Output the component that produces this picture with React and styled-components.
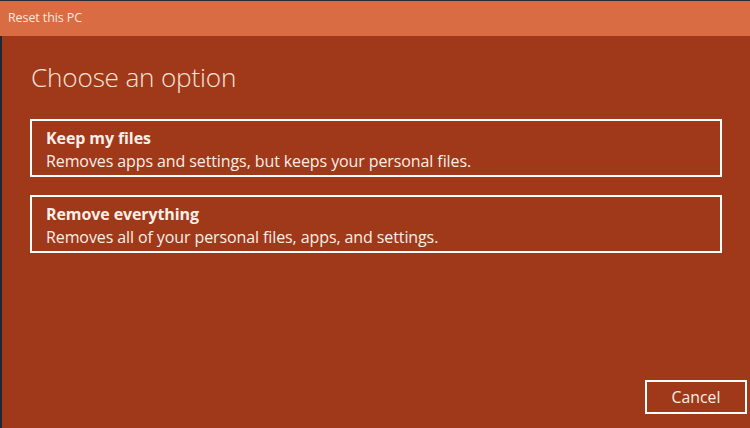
import React from "react";
import styled, { createGlobalStyle } from "styled-components";

const Global = createGlobalStyle`
  html, body { margin: 0; padding: 0; background: #A0391A; }
  body { font-family: "Open Sans", "Noto Sans", sans-serif; }
  #root { width: 750px; height: 428px; }
`;

const Window = styled.div`
  width: 750px;
  height: 428px;
  display: flex;
  flex-direction: column;
  background: #A0391A;
  border-top: 1px solid #23303a;
  box-sizing: border-box;
  overflow: hidden;
`;

const TitleBar = styled.div`
  height: 35px;
  flex: none;
  background: #DA6C43;
  display: flex;
  align-items: center;
  padding: 0 0 3px 8px;
  box-sizing: border-box;
  color: #fbe6dc;
  font-family: "Open Sans", sans-serif;
  font-size: 12.5px;
  letter-spacing: -0.1px;
`;

const Body = styled.div`
  flex: 1;
  display: flex;
  flex-direction: column;
  border-left: 2px solid #1e2a33;
  padding: 24px 28px 14px 28px;
  box-sizing: border-box;
`;

const Heading = styled.h1`
  margin: 0 0 25px 1px;
  font-family: "Open Sans", sans-serif;
  font-weight: 300;
  font-size: 26.2px;
  line-height: 34px;
  color: #f6e3da;
  letter-spacing: -0.2px;
`;

const Options = styled.div`
  display: flex;
  flex-direction: column;
  gap: 18px;
`;

const Option = styled.div`
  height: 58px;
  border: 2px solid #ffffff;
  box-sizing: border-box;
  padding: 6px 14px 0;
  display: flex;
  flex-direction: column;
  color: #fbeee8;
`;

const OptionTitle = styled.div`
  font-family: "Open Sans", sans-serif;
  font-weight: 700;
  font-size: 16px;
  line-height: 22px;
  letter-spacing: -0.1px;
`;

const OptionDesc = styled.div`
  font-family: "Open Sans", sans-serif;
  font-size: 16px;
  line-height: 24px;
  letter-spacing: -0.1px;
`;

const Footer = styled.div`
  margin-top: auto;
  display: flex;
  justify-content: flex-end;
  margin-right: -25px;
`;

const Button = styled.div`
  width: 102px;
  height: 34px;
  border: 2px solid #ffffff;
  box-sizing: border-box;
  display: flex;
  align-items: center;
  justify-content: center;
  color: #fbeee8;
  font-family: "Open Sans", sans-serif;
  font-size: 15.8px;
  padding-bottom: 1px;
`;

export default function App() {
  return (
    <>
      <Global />
      <Window>
        <TitleBar>Reset this PC</TitleBar>
        <Body>
          <Heading>Choose an option</Heading>
          <Options>
            <Option>
              <OptionTitle>Keep my files</OptionTitle>
              <OptionDesc>Removes apps and settings, but keeps your personal files.</OptionDesc>
            </Option>
            <Option>
              <OptionTitle>Remove everything</OptionTitle>
              <OptionDesc>Removes all of your personal files, apps, and settings.</OptionDesc>
            </Option>
          </Options>
          <Footer>
            <Button>Cancel</Button>
          </Footer>
        </Body>
      </Window>
    </>
  );
}
